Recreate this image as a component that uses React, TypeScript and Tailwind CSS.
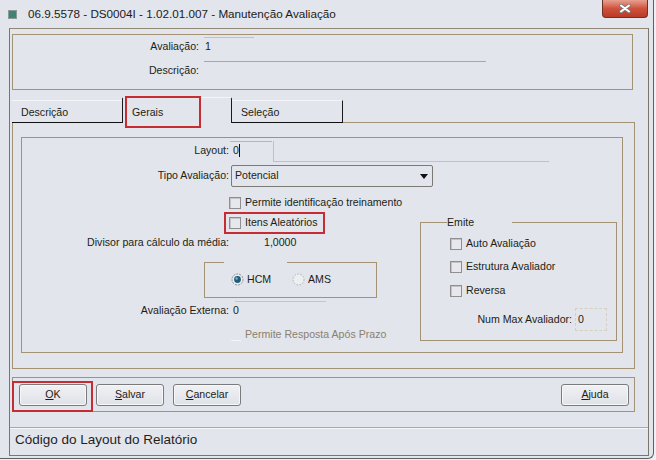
import React from 'react';

const brown = 'border-[#a39274]';

const Check = () => (
  <span className="block w-[12px] h-[12px] shrink-0 border border-[#8f8f8f] bg-[#e6e8ee] shadow-[inset_1px_1px_0_#c4c4c4]" />
);

const Radio = ({ on }: { on?: boolean }) => (
  <svg width="13" height="13" viewBox="0 0 13 13" className="shrink-0">
    <circle cx="6.5" cy="6.5" r="5.5" fill="#eceef2" stroke={on ? '#8a8a8a' : '#b0b0b0'} strokeDasharray={on ? '2 1' : '1.5 1.5'} />
    {on && <circle cx="6.5" cy="6.5" r="3.4" fill="#1f5c7c" />}
    {on && <circle cx="5.6" cy="5.5" r="1.2" fill="#7fb4d0" />}
  </svg>
);

const Button = ({ first, rest }: { first: string; rest: string }) => (
  <div className="w-[68px] h-[22px] flex items-center justify-center rounded-[3px] border border-[#7b7b7b] bg-gradient-to-b from-[#f0f1f4] to-[#dfe2e8] shadow-[inset_0_0_0_1px_#f7f7f7] text-[#1f1b13]">
    <span>
      <span className="underline">{first}</span>
      {rest}
    </span>
  </div>
);

const Label = ({ children, className = '' }: { children: React.ReactNode; className?: string }) => (
  <span className={`w-[207px] shrink-0 text-right ${className}`}>{children}</span>
);

export default function App() {
  return (
    <div className="w-[656px] h-[460px] bg-[#eef0f4] overflow-hidden font-['Liberation_Sans',Arial,sans-serif] text-[10.6px] text-[#221d14]">
      <div className="w-[654px] h-[459px] bg-[#e2e5eb] border-r border-b border-[#5f5f5f] rounded-br-[6px] flex flex-col">
        {/* title bar */}
        <div className="h-[28px] flex items-start shrink-0">
          <div className="flex items-center h-[28px] pl-[8px] flex-1">
            <span className="block w-[9px] h-[9px] border border-[#8d9996] bg-[#3f8373]" />
            <span className="ml-[11px] text-[11.7px] text-[#1c1c1c] leading-[16px] -mt-[1px]">
              06.9.5578 - DS0004I - 1.02.01.007 - Manutenção Avaliação
            </span>
          </div>
          <div className="w-[46px] h-[18px] mr-[5px] rounded-b-[4px] border border-t-0 border-[#6d3127] bg-gradient-to-b from-[#e7a08f] via-[#d0513c] to-[#b93a26] flex items-center justify-center">
            <svg width="12" height="9" viewBox="0 0 12 9">
              <path d="M2 1.5 L10 7.5 M10 1.5 L2 7.5" stroke="#7a7a7a" strokeWidth="3.6" strokeLinecap="round" />
              <path d="M2 1.5 L10 7.5 M10 1.5 L2 7.5" stroke="#ffffff" strokeWidth="2" strokeLinecap="round" />
            </svg>
          </div>
        </div>

        {/* frame */}
        <div className="ml-[9px] w-[640px] h-[428px] border border-[#7b766c] border-t-[#928774] flex flex-col shrink-0">
          {/* top group */}
          <div className={`mt-[5px] ml-[2px] w-[621px] h-[56px] border ${brown} flex flex-col`}>
            <div className="mt-[2px] flex">
              <span className="w-[186px] text-right pt-[2px] leading-[14px]">Avaliação:</span>
              <div className="ml-[5px] w-[282px] h-[25px] border-b border-[#b2a68f] flex flex-col">
                <span className="block w-[50px] h-px bg-[#c9c0ae]" />
                <span className="mt-[1px] pl-[1px] leading-[14px]">1</span>
              </div>
            </div>
            <div className="mt-[1px] flex">
              <span className="w-[186px] text-right leading-[14px]">Descrição:</span>
            </div>
          </div>

          {/* tabs */}
          <div className="mt-[7px] ml-[2px] w-[623px] h-[26px] flex items-end">
            <div className="w-[110px] h-[23px] border-t border-t-[#f4f5f8] border-b border-b-[#111] flex items-center pl-[9px] pt-[3px]">
              Descrição
            </div>
            <div className="relative w-[110px] h-[26px] border-l border-r border-t border-[#1a1a1a] border-t-[#f4f5f8] rounded-t-[2px] flex items-center pl-[9px] pt-[5px]">
              Gerais
              <span className="absolute left-[2px] top-[-2px] w-[76px] h-[32px] border-2 border-[#c62d33]" />
            </div>
            <div className="w-[111px] h-[23px] border-t border-t-[#f4f5f8] border-r border-r-[#1a1a1a] border-b border-b-[#111] flex items-center pl-[9px] pt-[3px]">
              Seleção
            </div>
            <div className={`flex-1 h-px border-b ${brown}`} />
          </div>

          {/* tab panel */}
          <div className={`ml-[2px] w-[623px] h-[246px] border-x border-b ${brown} flex flex-col`}>
            <div className={`ml-[8px] mt-[14px] w-[602px] h-[216px] border ${brown} flex flex-col`}>
              {/* Layout */}
              <div className="mt-[3px] h-[20px] flex items-start">
                <Label className="leading-[18px]">Layout:</Label>
                <div className="ml-[1px] w-[42px] h-[20px] border-t border-[#b6b6b6] flex items-center pl-[3px] pb-[2px]">
                  <span>0</span>
                  <span className="block w-px h-[13px] bg-[#111]" />
                </div>
                <div className="ml-[1px] w-[276px] h-[21px] border-l border-b border-[#c5c1b8]" />
              </div>
              {/* Tipo Avaliação */}
              <div className="mt-[4px] h-[22px] flex items-center">
                <Label>Tipo Avaliação:</Label>
                <div className="ml-[2px] w-[202px] h-[22px] border border-[#7c7a74] rounded-[2px] flex items-center pl-[3px] pr-[4px]">
                  <span className="flex-1">Potencial</span>
                  <svg width="8" height="5" viewBox="0 0 8 5">
                    <path d="M0 0 H8 L4 5 Z" fill="#111" />
                  </svg>
                </div>
              </div>
              {/* Permite identificação */}
              <div className="mt-[9px] h-[14px] flex items-center pl-[207px]">
                <Check />
                <span className="ml-[4px]">Permite identificação treinamento</span>
              </div>

              <div className="mt-[2px] flex">
                {/* left column */}
                <div className="w-[398px] shrink-0 flex flex-col">
                  <div className="ml-[202px] w-[101px] h-[22px] border-2 border-[#c62d33] flex items-center pl-[3px]">
                    <Check />
                    <span className="ml-[4px] whitespace-nowrap">Itens Aleatórios</span>
                  </div>
                  <div className="mt-[2px] h-[14px] flex items-center">
                    <Label>Divisor para cálculo da média:</Label>
                    <span className="ml-[35px]">1,0000</span>
                  </div>
                  <fieldset className={`mt-[12px] ml-[182px] w-[173px] h-[36px] border ${brown}`}>
                    <legend className="ml-[19px] w-[63px] h-0 p-0" />
                    <div className="h-[34px] flex items-center pl-[26px]">
                      <div className="w-[61px] flex items-center">
                        <Radio on />
                        <span className="ml-[3px]">HCM</span>
                      </div>
                      <div className="flex items-center">
                        <Radio />
                        <span className="ml-[3px]">AMS</span>
                      </div>
                    </div>
                  </fieldset>
                  <span className="block mt-[3px] ml-[213px] w-[91px] h-px bg-[#cbc5b9]" />
                  <div className="mt-[2px] h-[14px] flex items-center">
                    <Label>Avaliação Externa:</Label>
                    <span className="ml-[4px]">0</span>
                  </div>
                  <div className="mt-[10px] h-[14px] flex items-center pl-[209px]">
                    <span className="block w-[10px] h-[12px] border-b border-[#f4f5f8]" />
                    <span className="ml-[4px] text-[#8b8170]">Permite Resposta Após Prazo</span>
                  </div>
                </div>

                {/* Emite */}
                <fieldset className={`mt-[3px] w-[197px] h-[126px] border ${brown} flex flex-col`}>
                  <legend className="ml-[26px] w-[65px] p-0 leading-[14px]">Emite</legend>
                  <div className="mt-[8px] h-[14px] flex items-center pl-[29px]">
                    <Check />
                    <span className="ml-[4px]">Auto Avaliação</span>
                  </div>
                  <div className="mt-[9px] h-[14px] flex items-center pl-[29px]">
                    <Check />
                    <span className="ml-[4px]">Estrutura Avaliador</span>
                  </div>
                  <div className="mt-[10px] h-[14px] flex items-center pl-[29px]">
                    <Check />
                    <span className="ml-[4px]">Reversa</span>
                  </div>
                  <div className="mt-[10px] flex items-center justify-end pr-[9px]">
                    <span>Num Max Avaliador:</span>
                    <div className="ml-[3px] w-[32px] h-[23px] border border-dashed border-[#d6d0c4] flex items-center pl-[2px]">
                      0
                    </div>
                  </div>
                </fieldset>
              </div>
            </div>
          </div>

          {/* buttons */}
          <div className={`mt-[8px] ml-[2px] w-[623px] h-[35px] border ${brown} flex items-start`}>
            <div className="-ml-px mt-[3px] w-[81px] h-[31px] border-2 border-[#c62d33] pl-[5px] pt-px">
              <Button first="O" rest="K" />
            </div>
            <div className="ml-[3px] mt-[6px]">
              <Button first="S" rest="alvar" />
            </div>
            <div className="ml-[9px] mt-[6px]">
              <Button first="C" rest="ancelar" />
            </div>
            <div className="ml-auto mr-[5px] mt-[6px]">
              <Button first="A" rest="juda" />
            </div>
          </div>

          {/* status bar */}
          <div className="mt-[15px] flex-1 border-t border-[#a9a9a9] shadow-[inset_0_1px_0_#f5f6f8] flex items-center pl-[5px] pb-[3px]">
            <span className="text-[13.5px] text-[#1f1f1f]">Código do Layout do Relatório</span>
          </div>
        </div>
      </div>
    </div>
  );
}
